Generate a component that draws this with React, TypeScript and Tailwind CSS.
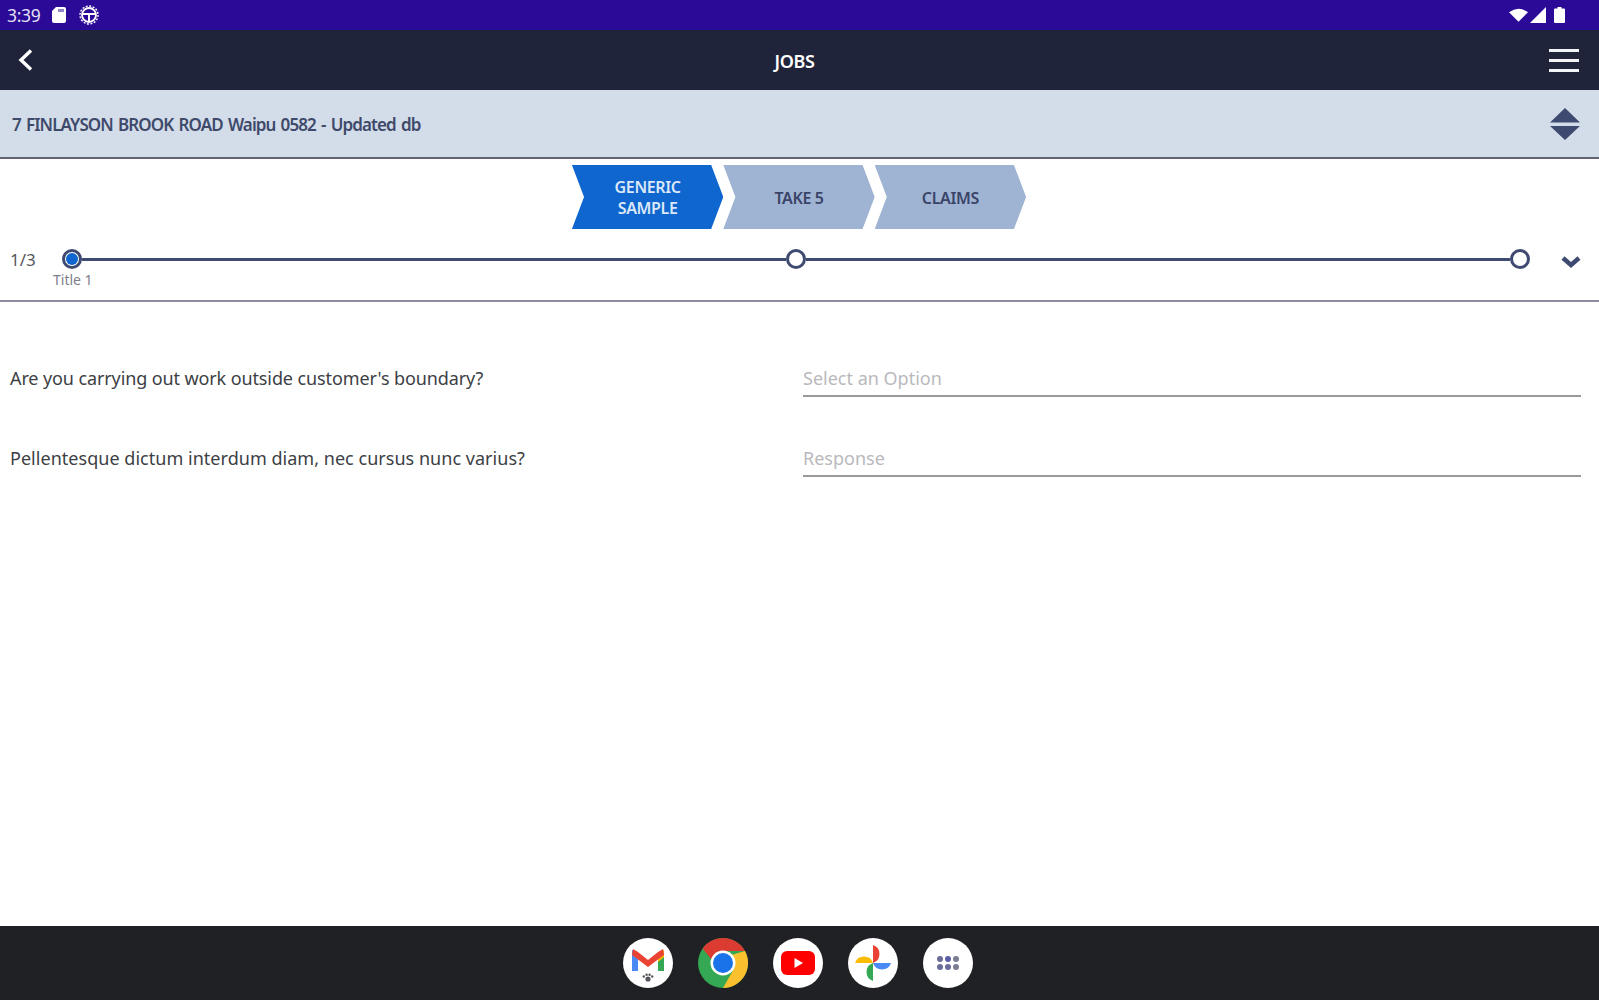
import React from 'react';

function Chevron({ active, children }: { active?: boolean; children: React.ReactNode }) {
  return (
    <div
      className={`flex h-[64px] w-[151.4px] items-center justify-center pt-[2px] text-center text-[16px] leading-[21px] font-semibold tracking-[-0.35px] [clip-path:polygon(0_0,92%_0,100%_50%,92%_100%,0_100%,8%_50%)] ${
        active ? 'bg-[#0f66cf] text-[#dbe8f7]' : 'bg-[#9fb4d3] text-[#3a4468]'
      }`}
    >
      {children}
    </div>
  );
}

function Dot({ active }: { active?: boolean }) {
  return (
    <div className="flex h-[20px] w-[20px] shrink-0 items-center justify-center rounded-full border-[3px] border-[#3f4a70] bg-white">
      {active && <div className="h-[12px] w-[12px] rounded-full bg-[#0f66cf]" />}
    </div>
  );
}

function Question({ label, placeholder, labelClass }: { label: string; placeholder: string; labelClass?: string }) {
  return (
    <div className="flex h-[44px] items-start pr-[18px] pl-[10px] text-[18px] leading-[30px]">
      <div className={`w-[793px] text-[#3d3f45] ${labelClass ?? ''}`}>{label}</div>
      <div className="h-[34px] flex-1 border-b-[2px] border-[#9a9a9e] text-[#b9b9bd]">{placeholder}</div>
    </div>
  );
}

function Gmail() {
  return (
    <svg viewBox="0 0 50 50" className="h-[50px] w-[50px]">
      <circle cx="25" cy="25" r="25" fill="#fff" />
      <path d="M9 15v18h6V20z" fill="#4a8af4" />
      <path d="M35 20v13h6V15z" fill="#34a853" />
      <path d="M9 12v7l6 5v-9z" fill="#4a8af4" />
      <path d="M35 15v9l6-5v-7z" fill="#fbbc04" />
      <path d="M10 11l5 3 10 8 10-8 5-3 1 6-16 12L9 17z" fill="#ea4335" />
      <circle cx="25" cy="41" r="2.6" fill="#55575c" />
      <circle cx="20.8" cy="38.5" r="1.2" fill="#55575c" />
      <circle cx="23.6" cy="36.8" r="1.2" fill="#55575c" />
      <circle cx="26.6" cy="36.8" r="1.2" fill="#55575c" />
      <circle cx="29.2" cy="38.5" r="1.2" fill="#55575c" />
    </svg>
  );
}

function Chrome() {
  return (
    <svg viewBox="0 0 50 50" className="h-[50px] w-[50px]">
      <circle cx="25" cy="25" r="25" fill="#34a853" />
      <path d="M25 0a25 25 0 0 1 22 13H25a12 12 0 0 0-11.5 8.500L4.600 10.500A25 25 0 0 1 25 0z" fill="#db3b30" />
      <path d="M47 13a25 25 0 0 1-22 37l10.500-18.500A12 12 0 0 0 33.500 17z" fill="#fbc02d" />
      <circle cx="25" cy="25" r="12.500" fill="#fff" />
      <circle cx="25" cy="25" r="10" fill="#1a73e8" />
    </svg>
  );
}

function Youtube() {
  return (
    <svg viewBox="0 0 50 50" className="h-[50px] w-[50px]">
      <circle cx="25" cy="25" r="25" fill="#fff" />
      <rect x="8" y="13" width="34" height="24" rx="6" fill="#f00" />
      <path d="M21.500 20v10l8.500-5z" fill="#fff" />
    </svg>
  );
}

function Photos() {
  return (
    <svg viewBox="0 0 50 50" className="h-[50px] w-[50px]">
      <circle cx="25" cy="25" r="25" fill="#fff" />
      <path d="M25 7a9.500 9.500 0 0 1 0 18z" fill="#ea4335" />
      <path d="M43 25a9.500 9.500 0 0 1-18 0z" fill="#4a8af4" />
      <path d="M25 43a9.500 9.500 0 0 1 0-18z" fill="#34a853" />
      <path d="M7 25a9.500 9.500 0 0 1 18 0z" fill="#fbbc04" />
    </svg>
  );
}

function Apps() {
  return (
    <div className="flex h-[50px] w-[50px] items-center justify-center rounded-full bg-white">
      <div className="grid grid-cols-3 gap-[2px]">
        {['#6a6d99', '#5b5ea6', '#7b7d92', '#6a6d99', '#6a6d99', '#7b7d92'].map((c, i) => (
          <svg key={i} viewBox="0 0 6 6" className="h-[6px] w-[6px]">
            <circle cx="3" cy="3" r="3" fill={c} />
          </svg>
        ))}
      </div>
    </div>
  );
}

export default function App() {
  return (
    <div className="flex h-[1000px] w-[1599px] flex-col overflow-hidden bg-white font-['Noto_Sans',sans-serif]">
      {/* Status bar */}
      <div className="flex h-[30px] shrink-0 items-center bg-[#2a0a96] pr-[34px] pl-[7px] text-white">
        <span className="text-[17.5px] tracking-[-0.3px] text-[#e4e0f5]">3:39</span>
        <svg viewBox="0 0 14 16" className="ml-[11px] h-[16px] w-[14px]">
          <path d="M4 0h8a2 2 0 0 1 2 2v12a2 2 0 0 1-2 2H2a2 2 0 0 1-2-2V4z" fill="#fff" />
          <path d="M7 2v3M9 2v3M11 2v3" stroke="#2a0a96" strokeWidth="1" />
        </svg>
        <svg viewBox="0 0 20 20" className="ml-[13px] h-[20px] w-[20px]" fill="none" stroke="#fff">
          <circle cx="10" cy="10" r="7" strokeWidth="1.800" />
          <circle cx="10" cy="10" r="9" strokeWidth="1.400" strokeDasharray="2 1.530" />
          <path d="M3.500 9h13M10 10v6.500" strokeWidth="2" />
        </svg>
        <div className="ml-auto flex items-center">
          <svg viewBox="0 0 18 13" className="h-[14px] w-[19px]">
            <path d="M0 4Q9-3 18 4L9 13z" fill="#fff" />
          </svg>
          <svg viewBox="0 0 16 16" className="ml-[2px] h-[16px] w-[16px]">
            <path d="M16 0v16H0z" fill="#fff" />
          </svg>
          <svg viewBox="0 0 11 16" className="ml-[8px] h-[16px] w-[11px]">
            <path d="M3.500 0h4v1.500H10a1 1 0 0 1 1 1V15a1 1 0 0 1-1 1H1a1 1 0 0 1-1-1V2.500a1 1 0 0 1 1-1h2.500z" fill="#fff" />
          </svg>
        </div>
      </div>

      {/* Nav */}
      <div className="flex h-[60px] shrink-0 items-center justify-between bg-[#20243b] pr-[20px] pl-[18px]">
        <svg viewBox="0 0 15 22" className="h-[22px] w-[15px]" fill="none" stroke="#fff" strokeWidth="3.400">
          <path d="M13 1.500L3 11l10 9.500" />
        </svg>
        <span className="mt-[3px] ml-[7px] text-[18px] font-semibold tracking-[-0.4px] text-white">JOBS</span>
        <div className="flex w-[30px] flex-col gap-[7px]">
          <div className="h-[3px] bg-[#f3f4f7]" />
          <div className="h-[3px] bg-[#f3f4f7]" />
          <div className="h-[3px] bg-[#f3f4f7]" />
        </div>
      </div>

      {/* Address */}
      <div className="flex h-[69px] shrink-0 items-center justify-between border-b-[2px] border-[#5f6470] bg-[#d3ddea] pr-[18px] pl-[12px]">
        <span className="mt-[3px] text-[17px] font-semibold tracking-[-0.9px] text-[#3f4a6b] [word-spacing:1.600px]">
          7 FINLAYSON BROOK ROAD Waipu 0582 - Updated db
        </span>
        <svg viewBox="0 0 32 32" className="h-[32px] w-[32px]">
          <path d="M16 0l15 14.500H1zM1 18h30L16 32z" fill="#3f4a70" />
        </svg>
      </div>

      {/* Tabs */}
      <div className="flex shrink-0 justify-center pt-[6px] pr-[1px]">
        <Chevron active>
          GENERIC
          <br />
          SAMPLE
        </Chevron>
        <Chevron>TAKE 5</Chevron>
        <Chevron>CLAIMS</Chevron>
      </div>

      {/* Progress */}
      <div className="h-[73px] shrink-0 border-b-[2px] border-[#8b8ba0] pt-[17px]">
        <div className="flex items-center pr-[18px] pl-[10px]">
          <span className="mt-[1px] w-[52px] text-[17px] text-[#55575c]">1/3</span>
          <Dot active />
          <div className="h-[3px] flex-1 bg-[#3f4a70]" />
          <Dot />
          <div className="h-[3px] flex-1 bg-[#3f4a70]" />
          <Dot />
          <svg viewBox="0 0 20 12" className="mt-[6px] ml-[31px] h-[12px] w-[20px]" fill="none" stroke="#3f4a70" strokeWidth="4.500">
            <path d="M2 2l8 7 8-7" />
          </svg>
        </div>
        <div className="mt-[-3px] pl-[53px] text-[14px] leading-[19px] text-[#7d7f8c]">Title 1</div>
      </div>

      {/* Form */}
      <div className="flex-1 bg-white pt-[61px]">
        <div className="flex flex-col gap-[36px]">
          <Question
            label="Are you carrying out work outside customer's boundary?"
            placeholder="Select an Option"
            labelClass="tracking-[-0.11px]"
          />
          <Question
            label="Pellentesque dictum interdum diam, nec cursus nunc varius?"
            placeholder="Response"
            labelClass="tracking-[0.03px]"
          />
        </div>
      </div>

      {/* Dock */}
      <div className="flex h-[74px] shrink-0 items-center justify-center gap-[25px] bg-[#202124] pr-[4px]">
        <Gmail />
        <Chrome />
        <Youtube />
        <Photos />
        <Apps />
      </div>
    </div>
  );
}
